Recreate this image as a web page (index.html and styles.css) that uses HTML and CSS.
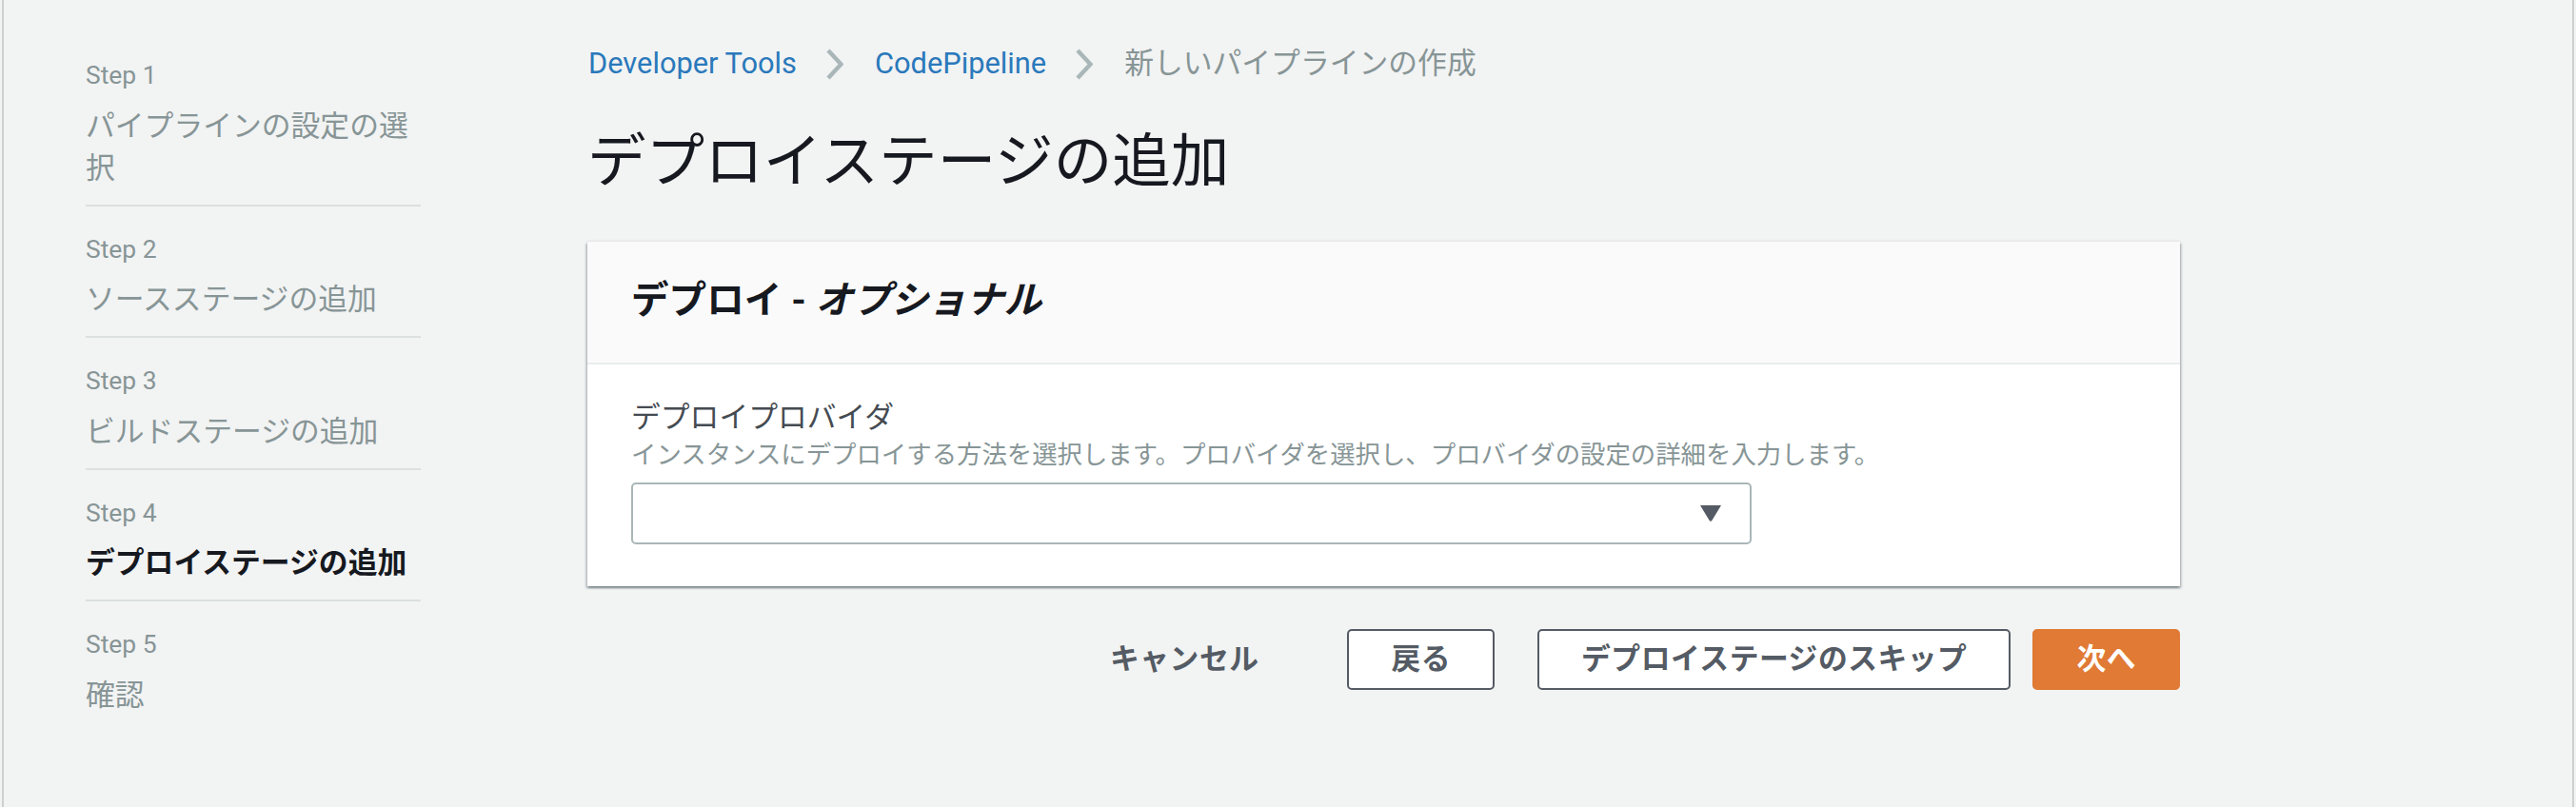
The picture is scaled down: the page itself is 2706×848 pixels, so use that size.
FILE: index.html
```html
<!DOCTYPE html>
<html lang="ja">
<head>
<meta charset="utf-8">
<title>デプロイステージの追加</title>
<link rel="stylesheet" href="styles.css">
</head>
<body>
<div class="frame">
  <nav class="steps">
    <ol class="step-list">
      <li class="step"><div class="step-label">Step 1</div><div class="step-name">パイプラインの設定の選択</div></li>
      <li class="step"><div class="step-label">Step 2</div><div class="step-name">ソースステージの追加</div></li>
      <li class="step"><div class="step-label">Step 3</div><div class="step-name">ビルドステージの追加</div></li>
      <li class="step"><div class="step-label">Step 4</div><div class="step-name current">デプロイステージの追加</div></li>
      <li class="step"><div class="step-label">Step 5</div><div class="step-name">確認</div></li>
    </ol>
  </nav>
  <main class="main">
    <div class="breadcrumb">
      <a class="crumb-link" href="#">Developer Tools</a>
      <svg class="chevron" width="18" height="33" viewBox="0 0 18 33"><polyline points="2,2 15.5,16.5 2,31" fill="none" stroke="#aab7b8" stroke-width="4.5"/></svg>
      <a class="crumb-link" href="#">CodePipeline</a>
      <svg class="chevron" width="18" height="33" viewBox="0 0 18 33"><polyline points="2,2 15.5,16.5 2,31" fill="none" stroke="#aab7b8" stroke-width="4.5"/></svg>
      <span class="crumb-current">新しいパイプラインの作成</span>
    </div>
    <h1 class="title">デプロイステージの追加</h1>
    <section class="card">
      <div class="card-header">
        <h2 class="card-title">デプロイ - <i class="optional">オプショナル</i></h2>
      </div>
      <div class="card-body">
        <div class="field-label">デプロイプロバイダ</div>
        <div class="field-desc">インスタンスにデプロイする方法を選択します。プロバイダを選択し、プロバイダの設定の詳細を入力します。</div>
        <div class="select" role="combobox">
          <svg class="caret" width="22" height="17" viewBox="0 0 22 17"><path d="M0 0 H22 L12.6 15.6 Q11 18 9.4 15.6 Z" fill="#545b64"/></svg>
        </div>
      </div>
    </section>
    <div class="actions">
      <button class="btn btn-link">キャンセル</button>
      <button class="btn btn-back">戻る</button>
      <button class="btn btn-skip">デプロイステージのスキップ</button>
      <button class="btn btn-primary">次へ</button>
    </div>
  </main>
</div>
</body>
</html>
```

FILE: styles.css
```css
html, body {
  margin: 0;
  padding: 0;
  height: 100%;
}
body {
  background: #f2f3f3;
  font-family: "Roboto", "Noto Sans CJK JP", sans-serif;
  color: #16191f;
}
.frame {
  box-sizing: border-box;
  min-height: 848px;
  margin: 0 2px;
  border-left: 2px solid #cdd1d1;
  border-right: 2px solid #cdd1d1;
  display: flex;
  align-items: flex-start;
}
.steps {
  width: 352px;
  margin-left: 86px;
  padding-top: 62px;
  flex: none;
}
.step-list {
  list-style: none;
  margin: 0;
  padding: 0;
}
.step {
  padding: 28px 0 16px;
  border-bottom: 2px solid #dbe0e0;
}
.step:first-child {
  padding-top: 0;
}
.step:last-child {
  border-bottom: none;
}
.step-label {
  font-size: 26.4px;
  line-height: 35px;
  color: #879596;
}
.step-name {
  margin-top: 13.5px;
  font-size: 30.8px;
  line-height: 44px;
  color: #879596;
}
.step-name.current {
  color: #16191f;
  font-weight: 700;
}
.main {
  flex: none;
  width: 1673px;
  margin-left: 175px;
  padding-top: 45px;
}
.breadcrumb {
  display: flex;
  align-items: center;
  height: 44px;
  font-size: 30.8px;
  line-height: 44px;
  padding-left: 1px;
}
.crumb-link {
  color: #2a79bb;
  text-decoration: none;
}
.chevron {
  display: block;
  margin: 0 33px 0 31px;
}
.crumb-current {
  color: #879596;
}
.title {
  margin: 42px 0 0;
  font-size: 61.6px;
  line-height: 79px;
  font-weight: 400;
  color: #16191f;
}
.card {
  margin-top: 44px;
  background: #fff;
  box-shadow: 0 2px 2px 0 rgba(0, 28, 36, 0.3), 2px 2px 2px 0 rgba(0, 28, 36, 0.15), -2px 2px 2px 0 rgba(0, 28, 36, 0.15), 0 -1px 2px 0 rgba(0, 28, 36, 0.08);
}
.card-header {
  background: #fafafa;
  padding: 35px 46px 39px;
  border-bottom: 2px solid #eaeded;
}
.card-title {
  margin: 0;
  font-size: 39.6px;
  line-height: 53px;
  font-weight: 700;
  color: #16191f;
}
.optional {
  font-style: italic;
}
.card-body {
  padding: 34px 46px 44px;
}
.field-label {
  font-size: 30.8px;
  line-height: 44px;
  color: #454b52;
}
.field-desc {
  font-size: 26.4px;
  line-height: 35px;
  color: #879596;
}
.select {
  box-sizing: border-box;
  margin-top: 11px;
  width: 1177px;
  height: 65px;
  border: 2px solid #aab7b8;
  border-radius: 5px;
  background: #fff;
  display: flex;
  align-items: center;
  justify-content: flex-end;
  padding-right: 30px;
}
.caret {
  display: block;
}
.actions {
  margin-top: 45px;
  display: flex;
  justify-content: flex-end;
  align-items: center;
}
.btn {
  font-family: "Roboto", "Noto Sans CJK JP", sans-serif;
  font-size: 30.8px;
  line-height: 42px;
  font-weight: 700;
  letter-spacing: 0.5px;
  padding: 9px 44px;
  border: 2px solid #545b64;
  border-radius: 5px;
  background: #fff;
  color: #545b64;
  margin: 0;
}
.btn-link {
  border-color: transparent;
  background: transparent;
  margin-right: 47px;
}
.btn-back {
  margin-right: 45px;
}
.btn-skip {
  margin-right: 23px;
}
.btn-primary {
  background: #e07a34;
  border-color: #e07a34;
  color: #fff;
}
```
